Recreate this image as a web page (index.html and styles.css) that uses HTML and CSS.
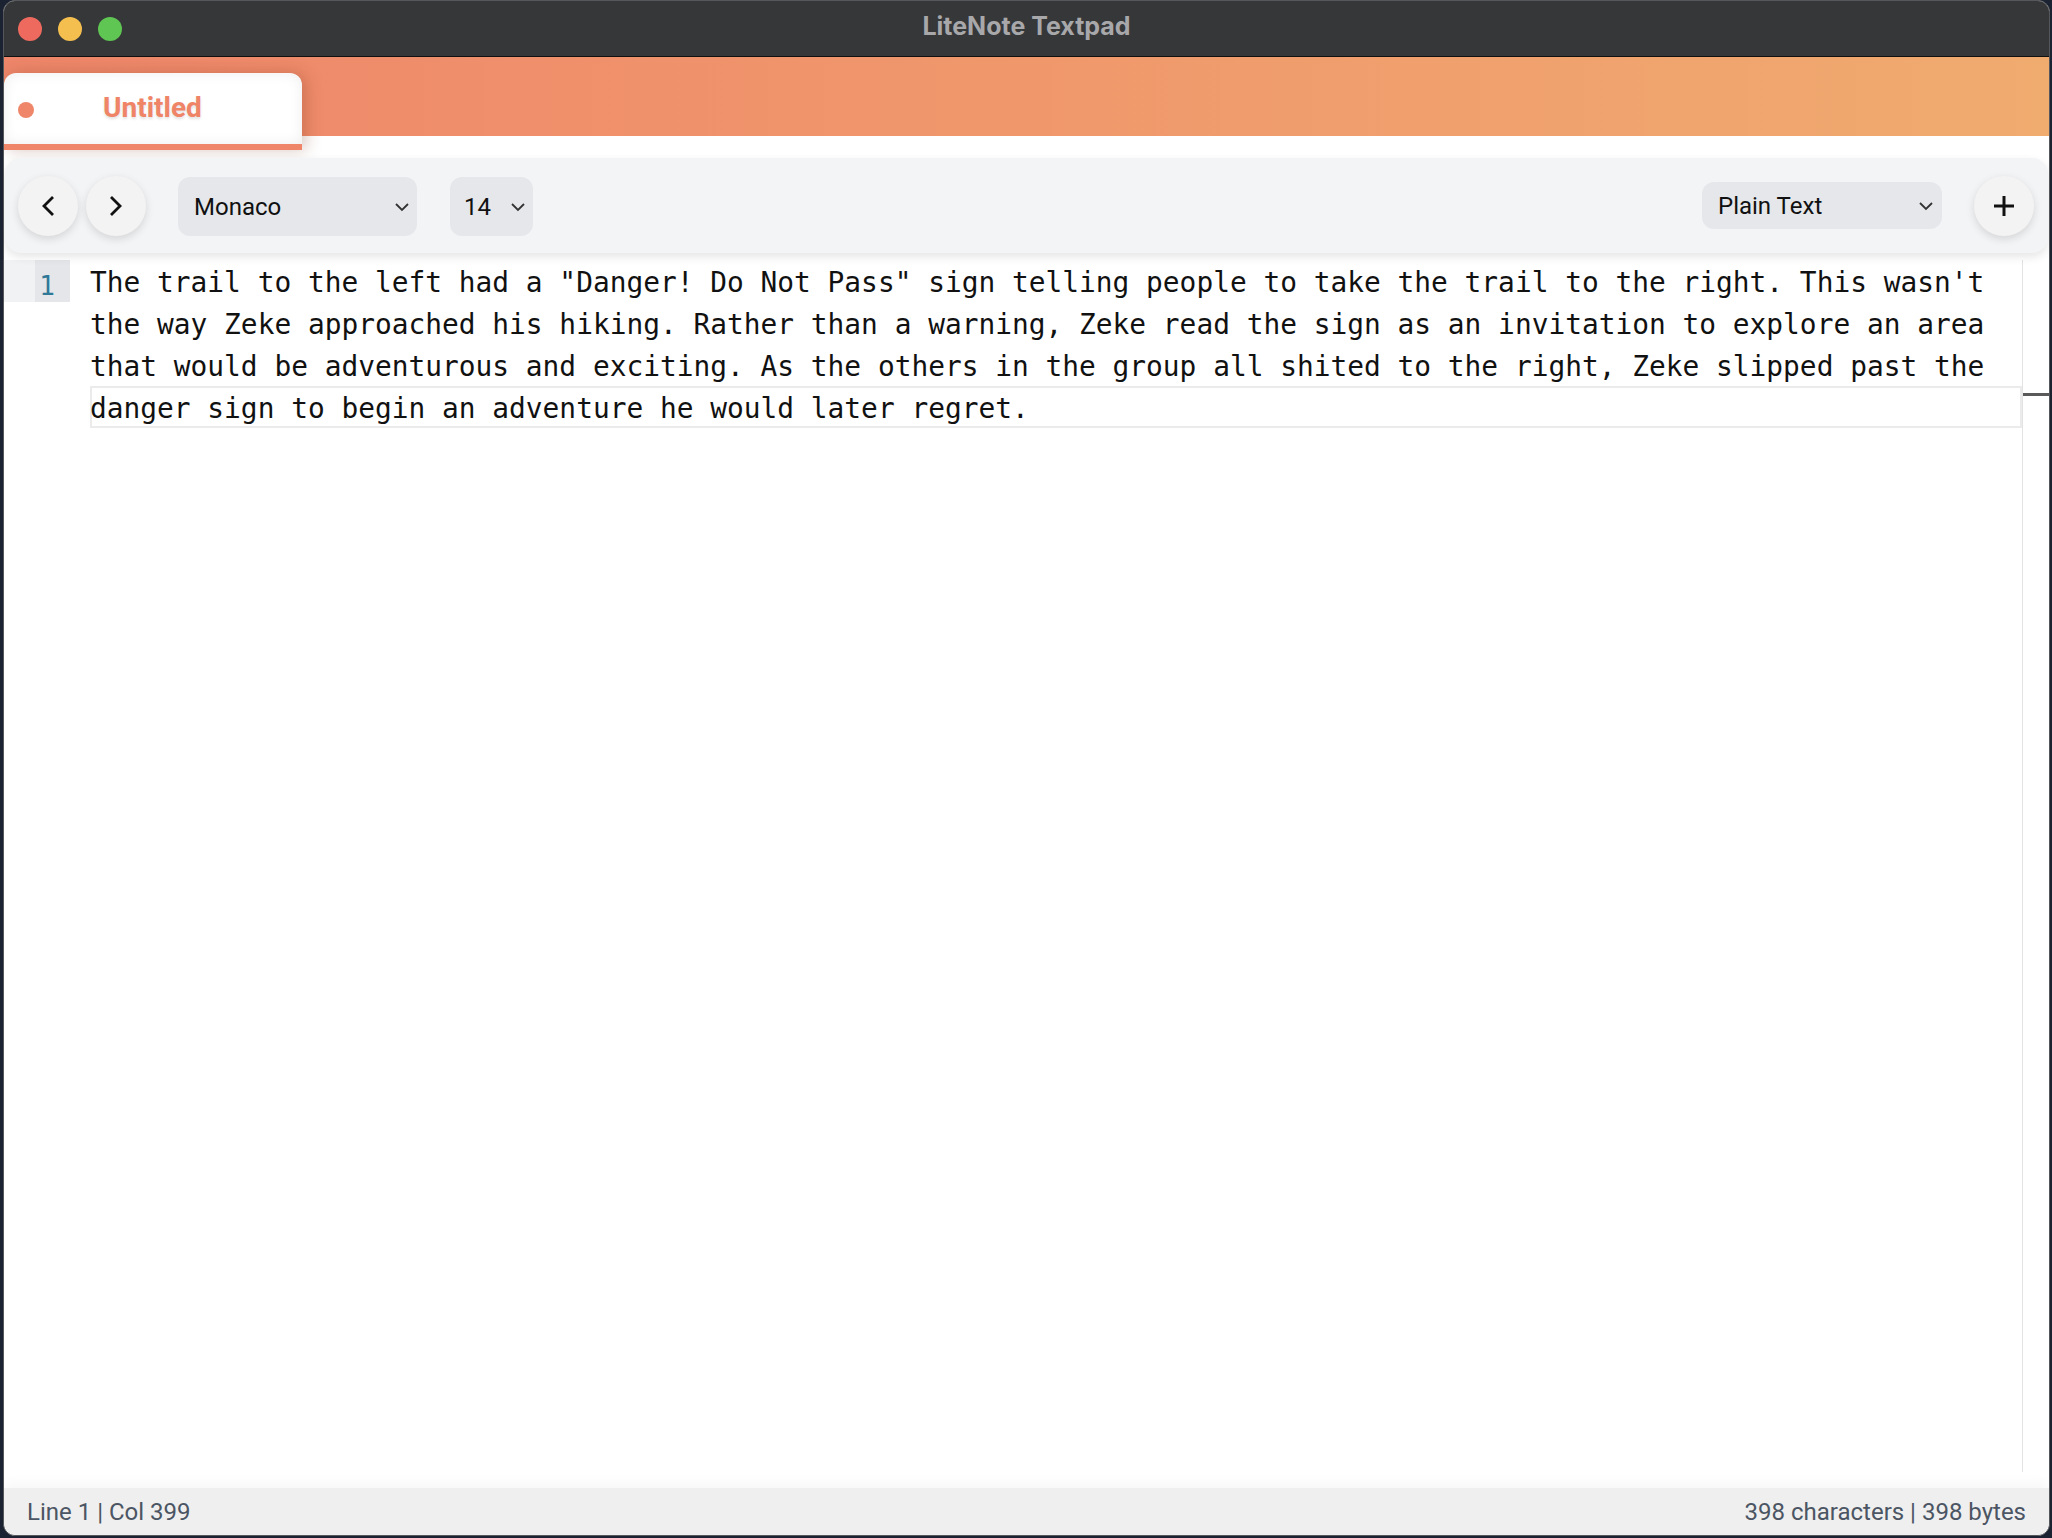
FILE: index.html
```html
<!DOCTYPE html>
<html>
<head>
<meta charset="utf-8">
<title>LiteNote Textpad</title>
<link rel="stylesheet" href="styles.css">
</head>
<body>
<div class="window">
  <div class="titlebar">
    <div class="lights">
      <span class="light red"></span>
      <span class="light yellow"></span>
      <span class="light green"></span>
    </div>
    <div class="title">LiteNote Textpad</div>
    <div class="title-spacer"></div>
  </div>

  <div class="tabbar">
    <div class="tab">
      <span class="tab-dot"></span>
      <span class="tab-name">Untitled</span>
    </div>
  </div>

  <div class="toolbar">
    <button class="circle-btn" aria-label="Back">
      <svg width="14" height="22" viewBox="0 0 14 22"><path d="M12 2 L3 11 L12 20" fill="none" stroke="#111" stroke-width="2.8" stroke-linejoin="miter"/></svg>
    </button>
    <button class="circle-btn" aria-label="Forward">
      <svg width="14" height="22" viewBox="0 0 14 22"><path d="M2 2 L11 11 L2 20" fill="none" stroke="#111" stroke-width="2.8" stroke-linejoin="miter"/></svg>
    </button>
    <div class="select select-font">
      <span>Monaco</span>
      <svg width="16" height="10" viewBox="0 0 16 10"><path d="M2 2 L8 8 L14 2" fill="none" stroke="#333" stroke-width="1.8"/></svg>
    </div>
    <div class="select select-size">
      <span>14</span>
      <svg width="16" height="10" viewBox="0 0 16 10"><path d="M2 2 L8 8 L14 2" fill="none" stroke="#333" stroke-width="1.8"/></svg>
    </div>
    <div class="toolbar-spacer"></div>
    <div class="select select-mode">
      <span>Plain Text</span>
      <svg width="16" height="10" viewBox="0 0 16 10"><path d="M2 2 L8 8 L14 2" fill="none" stroke="#333" stroke-width="1.8"/></svg>
    </div>
    <button class="circle-btn plus-btn" aria-label="New">
      <svg width="24" height="24" viewBox="0 0 24 24"><path d="M12 2 V22 M2 12 H22" fill="none" stroke="#111" stroke-width="3"/></svg>
    </button>
  </div>

  <div class="editor">
    <div class="gutter">
      <div class="ln-row">
        <span class="ln-pad"></span>
        <span class="ln-num">1</span>
      </div>
    </div>
    <div class="code">
      <div class="vline">The trail to the left had a "Danger! Do Not Pass" sign telling people to take the trail to the right. This wasn't</div>
      <div class="vline">the way Zeke approached his hiking. Rather than a warning, Zeke read the sign as an invitation to explore an area</div>
      <div class="vline">that would be adventurous and exciting. As the others in the group all shited to the right, Zeke slipped past the</div>
      <div class="vline current">danger sign to begin an adventure he would later regret.</div>
    </div>
    <div class="ruler"><span class="ruler-mark"></span></div>
  </div>

  <div class="statusbar">
    <span>Line 1 | Col 399</span>
    <span>398 characters | 398 bytes</span>
  </div>
</div>
</body>
</html>
```

FILE: styles.css
```css
* { box-sizing: border-box; }

html, body {
  margin: 0;
  padding: 0;
  background: #1b2332;
  width: 2052px;
  height: 1538px;
  overflow: hidden;
}

.window {
  margin-left: 3px;
  width: 2047px;
  height: 1536px;
  border: 1px solid #56575a;
  border-radius: 12px;
  overflow: hidden;
  background: #ffffff;
  display: flex;
  flex-direction: column;
  font-family: Roboto, "Liberation Sans", Arial, sans-serif;
}

/* Title bar */
.titlebar {
  height: 56px;
  flex: none;
  background: #363739;
  border-bottom: 1px solid #101010;
  display: grid;
  grid-template-columns: 1fr auto 1fr;
  align-items: center;
}

.lights {
  display: flex;
  gap: 16px;
  padding-left: 14px;
}

.light {
  width: 24px;
  height: 24px;
  border-radius: 50%;
  display: block;
}
.light.red { background: #ee6a5e; }
.light.yellow { background: #f5bf4f; }
.light.green { background: #5fc553; }

.title {
  font-family: Inter, Roboto, "Liberation Sans", sans-serif;
  font-weight: 700;
  font-size: 25px;
  color: #a8a8ab;
  margin-bottom: 5px;
}

/* Tab bar */
.tabbar {
  height: 93px;
  flex: none;
  background:
    linear-gradient(90deg, #ee866a 0%, #f0986c 50%, #f0ab6f 100%) top left / 100% 79px no-repeat,
    #ffffff;
}

.tab {
  margin-top: 16px;
  width: 298px;
  height: 77px;
  background: #ffffff;
  border-radius: 12px 12px 0 0;
  border-bottom: 6px solid #ef866a;
  box-shadow: 4px 0 16px rgba(120, 50, 30, 0.28), inset 0 0 14px rgba(0, 0, 0, 0.07);
  display: flex;
  align-items: center;
  padding-left: 14px;
}

.tab-dot {
  width: 16px;
  height: 16px;
  border-radius: 50%;
  background: #ef866a;
  flex: none;
  margin-top: 2px;
}

.tab-name {
  margin-left: 69px;
  margin-bottom: 3px;
  font-family: Roboto, "Liberation Sans", sans-serif;
  font-weight: 700;
  font-size: 28px;
  color: #ef8467;
  text-shadow: 0 2px 3px rgba(0, 0, 0, 0.12);
}

/* Toolbar */
.toolbar {
  flex: none;
  height: 95px;
  margin: 8px 1px 0 1px;
  background: #f3f4f6;
  border-radius: 16px;
  box-shadow: 0 4px 10px rgba(0, 0, 0, 0.10);
  display: flex;
  align-items: center;
  padding: 0 14px 0 13px;
  position: relative;
  z-index: 2;
}

.circle-btn {
  width: 60px;
  height: 60px;
  border-radius: 50%;
  border: none;
  background: #f3f3f3;
  box-shadow: 0 3px 8px rgba(0, 0, 0, 0.13);
  display: flex;
  align-items: center;
  justify-content: center;
  padding: 0;
  flex: none;
}

.circle-btn + .circle-btn { margin-left: 8px; }

.select {
  background: #e5e7eb;
  border-radius: 12px;
  display: flex;
  align-items: center;
  justify-content: space-between;
  font-size: 24px;
  color: #111111;
  flex: none;
}

.select svg { flex: none; }

.select-font {
  width: 239px;
  height: 59px;
  margin-left: 32px;
  padding: 0 7px 0 16px;
  margin-top: 2px;
}

.select-size {
  width: 83px;
  height: 59px;
  margin-left: 33px;
  padding: 0 7px 0 14px;
  margin-top: 2px;
}

.toolbar-spacer { flex: 1; }

.select-mode {
  width: 240px;
  height: 47px;
  padding: 0 8px 0 16px;
}

.plus-btn { margin-left: 32px; }

/* Editor */
.editor {
  flex: 1;
  display: flex;
  padding-top: 7px;
  background: #ffffff;
  min-height: 0;
}

.gutter {
  width: 66px;
  flex: none;
}

.ln-row {
  height: 42px;
  display: flex;
}

.ln-pad {
  width: 31px;
  background: #f1f2f4;
}

.ln-num {
  width: 35px;
  background: #e4e6e9;
  text-align: right;
  padding-right: 15px;
  padding-top: 11px;
  font-family: "DejaVu Sans Mono", "Liberation Mono", monospace;
  font-size: 26px;
  line-height: 30px;
  color: #2f7898;
}

.code {
  flex: 1;
  margin-left: 20px;
  font-family: "DejaVu Sans Mono", "Liberation Mono", monospace;
  font-size: 27.85px;
  line-height: 42px;
  color: #111111;
}

.vline {
  height: 42px;
  padding-top: 2px;
  white-space: pre;
}

.vline.current {
  box-shadow: inset 0 0 0 2px #ebebeb;
}

.ruler {
  width: 27px;
  flex: none;
  border-left: 1px solid #e3e3e3;
  margin-bottom: 16px;
}

.ruler-mark {
  display: block;
  margin-top: 133px;
  height: 3px;
  background: #5a5a5a;
}

/* Status bar */
.statusbar {
  flex: none;
  height: 47px;
  background: #efefef;
  border-radius: 0 0 12px 12px;
  box-shadow: 0 -6px 12px rgba(0, 0, 0, 0.03);
  display: flex;
  align-items: center;
  justify-content: space-between;
  padding: 0 23px 0 23px;
  font-size: 24px;
  color: #4b5563;
}
```
